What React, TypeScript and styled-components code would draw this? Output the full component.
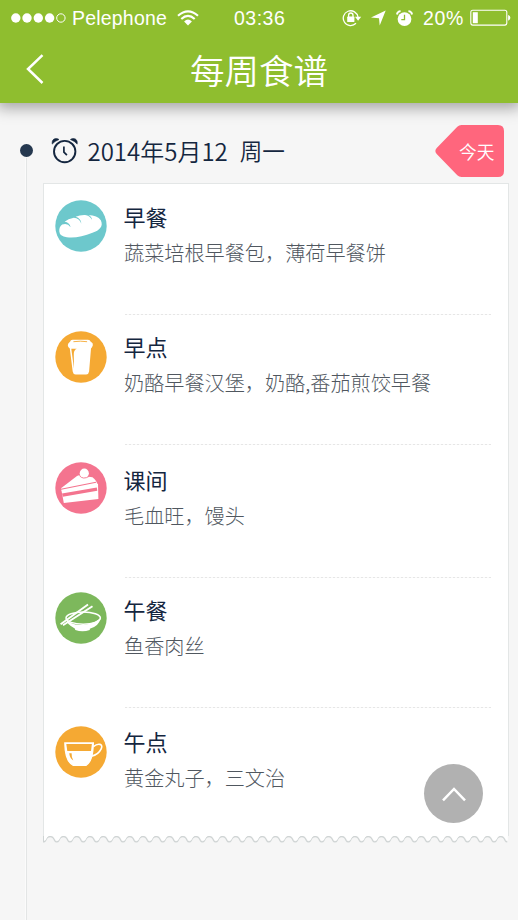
import React from "react";
import styled, { createGlobalStyle } from "styled-components";

const GlobalStyle = createGlobalStyle`
  * { box-sizing: border-box; }
  body {
    margin: 0;
    background: #f6f6f6;
    font-family: "Liberation Sans", "Noto Sans CJK SC", sans-serif;
  }
  svg { display: block; flex: none; }
`;

const Screen = styled.div`
  position: relative;
  display: flex;
  flex-direction: column;
  width: 518px;
  height: 920px;
  overflow: hidden;
  background: #f6f6f6;
`;

const Header = styled.header`
  flex: none;
  height: 103px;
  color: #fff;
  background: #8fbe2f;
  box-shadow: 0 2px 14px 3px rgba(0, 0, 0, 0.34);
`;

const StatusBar = styled.div`
  display: grid;
  grid-template-columns: 234px 108px 1fr;
  height: 36px;
  align-items: center;
  font-size: 19.5px;
  line-height: 36px;
`;

const StatusGroup = styled.div<{ $start?: number }>`
  display: flex;
  align-items: center;
  height: 36px;
  padding-left: ${(p) => p.$start ?? 0}px;
`;

const StatusText = styled.span<{ $spacing?: number; $left?: number; $right?: number }>`
  letter-spacing: ${(p) => p.$spacing ?? 0}px;
  margin-left: ${(p) => p.$left ?? 0}px;
  margin-right: ${(p) => p.$right ?? 0}px;
  white-space: nowrap;
`;

const NavBar = styled.div`
  display: grid;
  grid-template-columns: 100px 1fr 100px;
  align-items: center;
  height: 66px;
`;

const BackButton = styled.button`
  display: flex;
  align-items: center;
  width: 60px;
  height: 60px;
  padding: 0 0 0 25px;
  border: 0;
  background: none;
`;

const Title = styled.h1`
  margin: -1px 0 0;
  font-family: "Noto Sans CJK SC", sans-serif;
  font-size: 34.5px;
  font-weight: 350;
  line-height: 66px;
  text-align: center;
`;

const Timeline = styled.main`
  display: grid;
  grid-template-columns: 43px 466px;
  flex: 1;
`;

const Rail = styled.div`
  display: flex;
  flex-direction: column;
  align-items: center;
  padding: 41px 0 0 9px;
`;

const RailDot = styled.i`
  width: 13px;
  height: 13px;
  border-radius: 50%;
  background: #25384f;
`;

const RailLine = styled.i`
  flex: 1;
  width: 2px;
  margin-top: 1px;
  background: linear-gradient(90deg, #fbfbfb 50%, #e3e5e5 50%);
`;

const Day = styled.section`
  display: flex;
  flex-direction: column;
`;

const DayHead = styled.div`
  display: flex;
  align-items: center;
  height: 80px;
  padding: 15px 5px 0 8px;
`;

const DateText = styled.div`
  display: flex;
  flex: 1;
  gap: 12px;
  margin-left: 9.5px;
  color: #14263f;
  font-size: 24px;
  line-height: 34px;
  font-weight: 350;
  font-family: "Noto Sans CJK SC", sans-serif;
`;

const Weekday = styled.span`
  font-size: 22.6px;
`;

const TodayTag = styled.div`
  display: grid;
  width: 69px;
  height: 52px;
`;

const TagShape = styled.svg`
  grid-area: 1 / 1;
`;

const TagLabel = styled.span`
  grid-area: 1 / 1;
  z-index: 1;
  padding-left: 24px;
  color: #fff;
  font-family: "Noto Sans CJK SC", sans-serif;
  font-size: 17.7px;
  font-weight: 350;
  line-height: 52px;
`;

const Card = styled.div`
  height: 653px;
  border: 1px solid #e3e6e6;
  border-bottom: 0;
  background: #fff;
`;

const MealRow = styled.article<{ $height: number }>`
  display: grid;
  grid-template-columns: 81px 366px;
  height: ${(p) => p.$height}px;
`;

const MealIcon = styled.div<{ $top: number }>`
  padding: ${(p) => p.$top}px 0 0 11px;
`;

const MealBody = styled.div<{ $top: number; $divided: boolean }>`
  padding-top: ${(p) => p.$top}px;
  background-image: ${(p) =>
    p.$divided ? "repeating-linear-gradient(90deg, #e6e6e6 0 2px, #fafafa 2px 4px)" : "none"};
  background-size: 100% 1px;
  background-position: 0 100%;
  background-repeat: no-repeat;
  font-family: "Noto Sans CJK SC", sans-serif;
  white-space: nowrap;
`;

const MealName = styled.h2`
  margin: 0 0 0 -1.5px;
  color: #14263f;
  font-size: 22px;
  font-weight: 400;
  line-height: 36px;
`;

const MealDesc = styled.p`
  margin: 0 0 0 -1px;
  color: #50575f;
  font-size: 20.15px;
  font-weight: 300;
  line-height: 37px;
`;

const TopButton = styled.button`
  position: absolute;
  right: 35px;
  bottom: 97px;
  display: flex;
  align-items: center;
  justify-content: center;
  width: 59px;
  height: 59px;
  padding: 0;
  border: 0;
  border-radius: 50%;
  background: #b1b1b1;
`;

const Signal = () => (
  <svg width="56" height="12" viewBox="0 0 56 12" fill="#fff">
    {[4.8, 16, 27.3, 38.6].map((x) => (
      <circle key={x} cx={x} cy="6" r="4.7" />
    ))}
    <circle cx="49.9" cy="6" r="4.2" fill="none" stroke="#fff" />
  </svg>
);

const Wifi = () => (
  <svg width="22" height="16" viewBox="0 0 22 16" fill="none" stroke="#fff" strokeWidth="2.1">
    <path d="M1 5.8Q11-3.2 21 5.8" />
    <path d="M4.3 9Q11 2.9 17.7 9" />
    <path d="M7.1 11.4Q11 7.8 14.9 11.4L11 15.4Z" fill="#fff" stroke="none" />
  </svg>
);

const RotationLock = () => (
  <svg width="20" height="18" viewBox="0 0 20 18" fill="none" stroke="#fff">
    <path d="M14 14.3A7.4 7.4 0 1 1 16 8.2" strokeWidth="1.3" />
    <path d="M13 7.8h6.2l-3.1 4Z" fill="#fff" stroke="none" />
    <rect x="5.2" y="7.6" width="7.2" height="5.4" rx=".6" fill="#fff" stroke="none" />
    <path d="M6.6 8V6.2a2.2 2.2 0 0 1 4.4 0V8" strokeWidth="1.3" />
  </svg>
);

const Location = () => (
  <svg width="15" height="16" viewBox="0 0 15 16" fill="#fff">
    <path d="M14.7.5 8.7 15.6 8 8.3 0 7.4Z" />
  </svg>
);

const StatusAlarm = () => (
  <svg width="17" height="17" viewBox="0 0 17 17">
    <circle cx="8.5" cy="9.1" r="6.9" fill="#fff" />
    <path d="M8.5 4.8v4.8H5.3" fill="none" stroke="#8fbe2f" strokeWidth="1.3" />
    <path d="M.9 4.5Q1.4 1.4 4.6 1.2M16.1 4.5Q15.6 1.4 12.4 1.2" fill="none" stroke="#fff" strokeWidth="1.8" />
  </svg>
);

const Battery = () => (
  <svg width="41" height="18" viewBox="0 0 41 18">
    <rect x=".8" y="1.3" width="36" height="14.8" rx="2" fill="none" stroke="#fff" strokeWidth="1.1" />
    <rect x="2.8" y="3.2" width="5" height="11" fill="#fff" />
    <path d="M38.1 6q2.3.5 2.3 2.8t-2.3 2.8Z" fill="#fff" />
  </svg>
);

const AlarmClock = () => (
  <svg width="27" height="26" viewBox="0 0 27 26" fill="none" stroke="#14263f">
    <circle cx="13.7" cy="13.6" r="10.7" strokeWidth="1.9" />
    <path d="M12.9 8.5v5.6l3 3.1" strokeWidth="1.7" />
    <path d="M1.2 6.1Q.6 1.2 4.6.6 6.6.4 8 1.5 3.7 3 1.2 6.1ZM26.2 6.1Q26.8 1.2 22.8.6 20.8.4 19.4 1.5 23.7 3 26.2 6.1Z" fill="#14263f" stroke="#14263f" strokeWidth=".6" />
  </svg>
);

const Bread = () => (
  <path
    fill="#fff"
    d="M4.3 31.5C4 28.2 5.2 26 7.2 24.6Q12.4 22.6 15.6 27.2Q14.6 22.4 9.6 21.8Q13 18.8 18.8 17.8Q24.6 18.2 26.3 23.8Q26.2 18.6 20.6 16.8Q25 14.8 30.1 15Q34.8 15.6 37 19.8Q36.8 16.4 33.2 14.9Q42.5 15.2 45.8 20.2C48.7 26.3 44.7 30.2 37.5 32.8C28.2 36.7 19.2 38.1 11.8 37.2Q4.6 36.2 4.3 31.5Z"
  />
);

const Cup = () => (
  <>
    <path
      fill="#fff"
      d="M15.2 10.5Q15.4 8.7 17.6 8.7H33Q35.2 8.8 35.5 10.5L37.6 12.3Q38.4 14.3 37 16.2L36 17.4 34.1 40.5Q33.8 43.2 31.2 43.4H20.6Q18 43.2 17.7 40.5L14.8 17.4 13.3 16Q12.3 14 13.3 12.4Z"
    />
    <path d="M16.3 17.7h5.4q-3.6 1.7-2.9 7.3l.2 12.8Z" fill="#f5a933" />
    <path d="M18.4 10.7q7.1-1 13.7 0" fill="none" stroke="#f5a933" strokeWidth=".9" />
  </>
);

const Cake = () => (
  <>
    <path fill="#fff" d="M6 26.2 22 14Q23.4 13.2 25 13.4L37.5 15.2Q41.8 18.6 42.9 23.6L25.5 26.8 7.2 29.8Z" />
    <circle cx="29.3" cy="11.2" r="4.6" fill="#fff" />
    <path d="M24.4 13.6Q28 18.2 34.4 14.2" fill="none" stroke="#f4748f" strokeWidth=".9" />
    <path d="M6.3 27.6 43 21.7 43.4 37 8.8 40.9Z" fill="#fff" />
    <path d="M6 27.2 41 20.2" fill="none" stroke="#f4748f" strokeWidth="1.1" />
    <path d="M7 31.4 41.8 25.5 42.3 28.8 7.8 34.7Z" fill="#f4748f" />
  </>
);

const Bowl = () => (
  <>
    <ellipse cx="28.2" cy="26.1" rx="17.2" ry="6.1" fill="none" stroke="#fff" strokeWidth="1.5" />
    <path
      d="M10.9 25.8C13.4 34.8 35 35.8 45.5 25.8Q44.3 34.1 34.8 36.8V38.1Q27.5 40.5 20.3 38.1L19.8 36.4Q11 32.2 10.9 25.8Z"
      fill="#fff"
    />
    <path d="M5.6 32.3 33 12.4M8 33.2 37.5 14.3" fill="none" stroke="#fff" strokeWidth="1.9" />
  </>
);

const Tea = () => (
  <>
    <path
      d="M9.8 16.9H38.4C38 27 37.1 35.3 31.2 39.3H18C11.8 36 9.9 27 9.8 16.9Z"
      fill="#fff"
      stroke="#fff"
      strokeWidth="1.2"
    />
    <path d="M11.3 17.9H36.9L36 25H12.3Z" fill="#f5a933" />
    <path d="M14.2 27.3h2.4q-.2 4 1.7 7.3Q14.9 32.5 14.2 27.3Z" fill="#f5a933" />
    <path d="M38.4 20.6C43.3 16.6 48.4 18 46.3 22.7 44.4 26.8 40.3 29.4 36.4 30.2" fill="none" stroke="#fff" strokeWidth="1.6" />
  </>
);

const Back = () => (
  <svg width="20" height="32" viewBox="0 0 20 32">
    <path d="M17.5 2.2 3 16 17.5 30" fill="none" stroke="#fff" strokeWidth="2.5" />
  </svg>
);

const scallops = "c1.2 0 1.6-.6 2.2-1.6 2-4.9 6.9-4.9 8.85 0 .6 1 1 1.6 2.2 1.6".repeat(35);

const ScallopEdge = () => (
  <svg width="466" height="7" viewBox="0 0 466 7">
    <path d={`M.5 0V5.9${scallops}`} fill="none" stroke="#cfd4d4" strokeWidth="1.3" />
    <path d={`M1 0V5.2${scallops}V0Z`} fill="#fff" transform="translate(0 -.6)" />
  </svg>
);

const meals = [
  { name: "早餐", desc: "蔬菜培根早餐包，薄荷早餐饼", color: "#6dc8cc", Art: Bread, height: 131, icon: 16, text: 14 },
  { name: "早点", desc: "奶酪早餐汉堡，奶酪,番茄煎饺早餐", color: "#f5a933", Art: Cup, height: 130, icon: 16, text: 13 },
  { name: "课间", desc: "毛血旺，馒头", color: "#f4748f", Art: Cake, height: 133, icon: 17, text: 16 },
  { name: "午餐", desc: "鱼香肉丝", color: "#7db85c", Art: Bowl, height: 130, icon: 14, text: 13 },
  { name: "午点", desc: "黄金丸子，三文治", color: "#f5a933", Art: Tea, height: 127, icon: 18, text: 15 },
];

export default function App() {
  return (
    <>
      <GlobalStyle />
      <Screen>
        <Header>
          <StatusBar>
            <StatusGroup $start={11}>
              <Signal />
              <StatusText $left={5} $spacing={0.2} $right={10}>Pelephone</StatusText>
              <Wifi />
            </StatusGroup>
            <StatusText $spacing={0.5}>03:36</StatusText>
            <StatusGroup>
              <RotationLock />
              <StatusText $left={9}><Location /></StatusText>
              <StatusText $left={10} $right={10}><StatusAlarm /></StatusText>
              <StatusText $spacing={0.7} $right={6}>20%</StatusText>
              <Battery />
            </StatusGroup>
          </StatusBar>
          <NavBar>
            <BackButton aria-label="返回"><Back /></BackButton>
            <Title>每周食谱</Title>
          </NavBar>
        </Header>
        <Timeline>
          <Rail>
            <RailDot />
            <RailLine />
          </Rail>
          <Day>
            <DayHead>
              <AlarmClock />
              <DateText><span>2014年5月12</span><Weekday>周一</Weekday></DateText>
              <TodayTag>
                <TagShape width="69" height="52" viewBox="0 0 69 52">
                  <path d="M26.5 0H63Q69 0 69 6V46Q69 52 63 52H26.5Q24 52 22.3 50.2L1.7 29Q-1 26 1.7 23L22.3 1.8Q24 0 26.5 0Z" fill="#ff667d" />
                </TagShape>
                <TagLabel>今天</TagLabel>
              </TodayTag>
            </DayHead>
            <Card>
              {meals.map(({ name, desc, color, Art, height, icon, text }, i) => (
                <MealRow key={name} $height={height}>
                  <MealIcon $top={icon}>
                    <svg width="52" height="52" viewBox="0 0 52 52">
                      <circle cx="26" cy="26" r="25.7" fill={color} />
                      <Art />
                    </svg>
                  </MealIcon>
                  <MealBody $top={text} $divided={i < meals.length - 1}>
                    <MealName>{name}</MealName>
                    <MealDesc>{desc}</MealDesc>
                  </MealBody>
                </MealRow>
              ))}
            </Card>
            <ScallopEdge />
          </Day>
        </Timeline>
        <TopButton aria-label="回到顶部">
          <svg width="26" height="16" viewBox="0 0 26 16">
            <path d="M2 14.3 13 3 24 14.3" fill="none" stroke="#fff" strokeWidth="2.5" />
          </svg>
        </TopButton>
      </Screen>
    </>
  );
}
